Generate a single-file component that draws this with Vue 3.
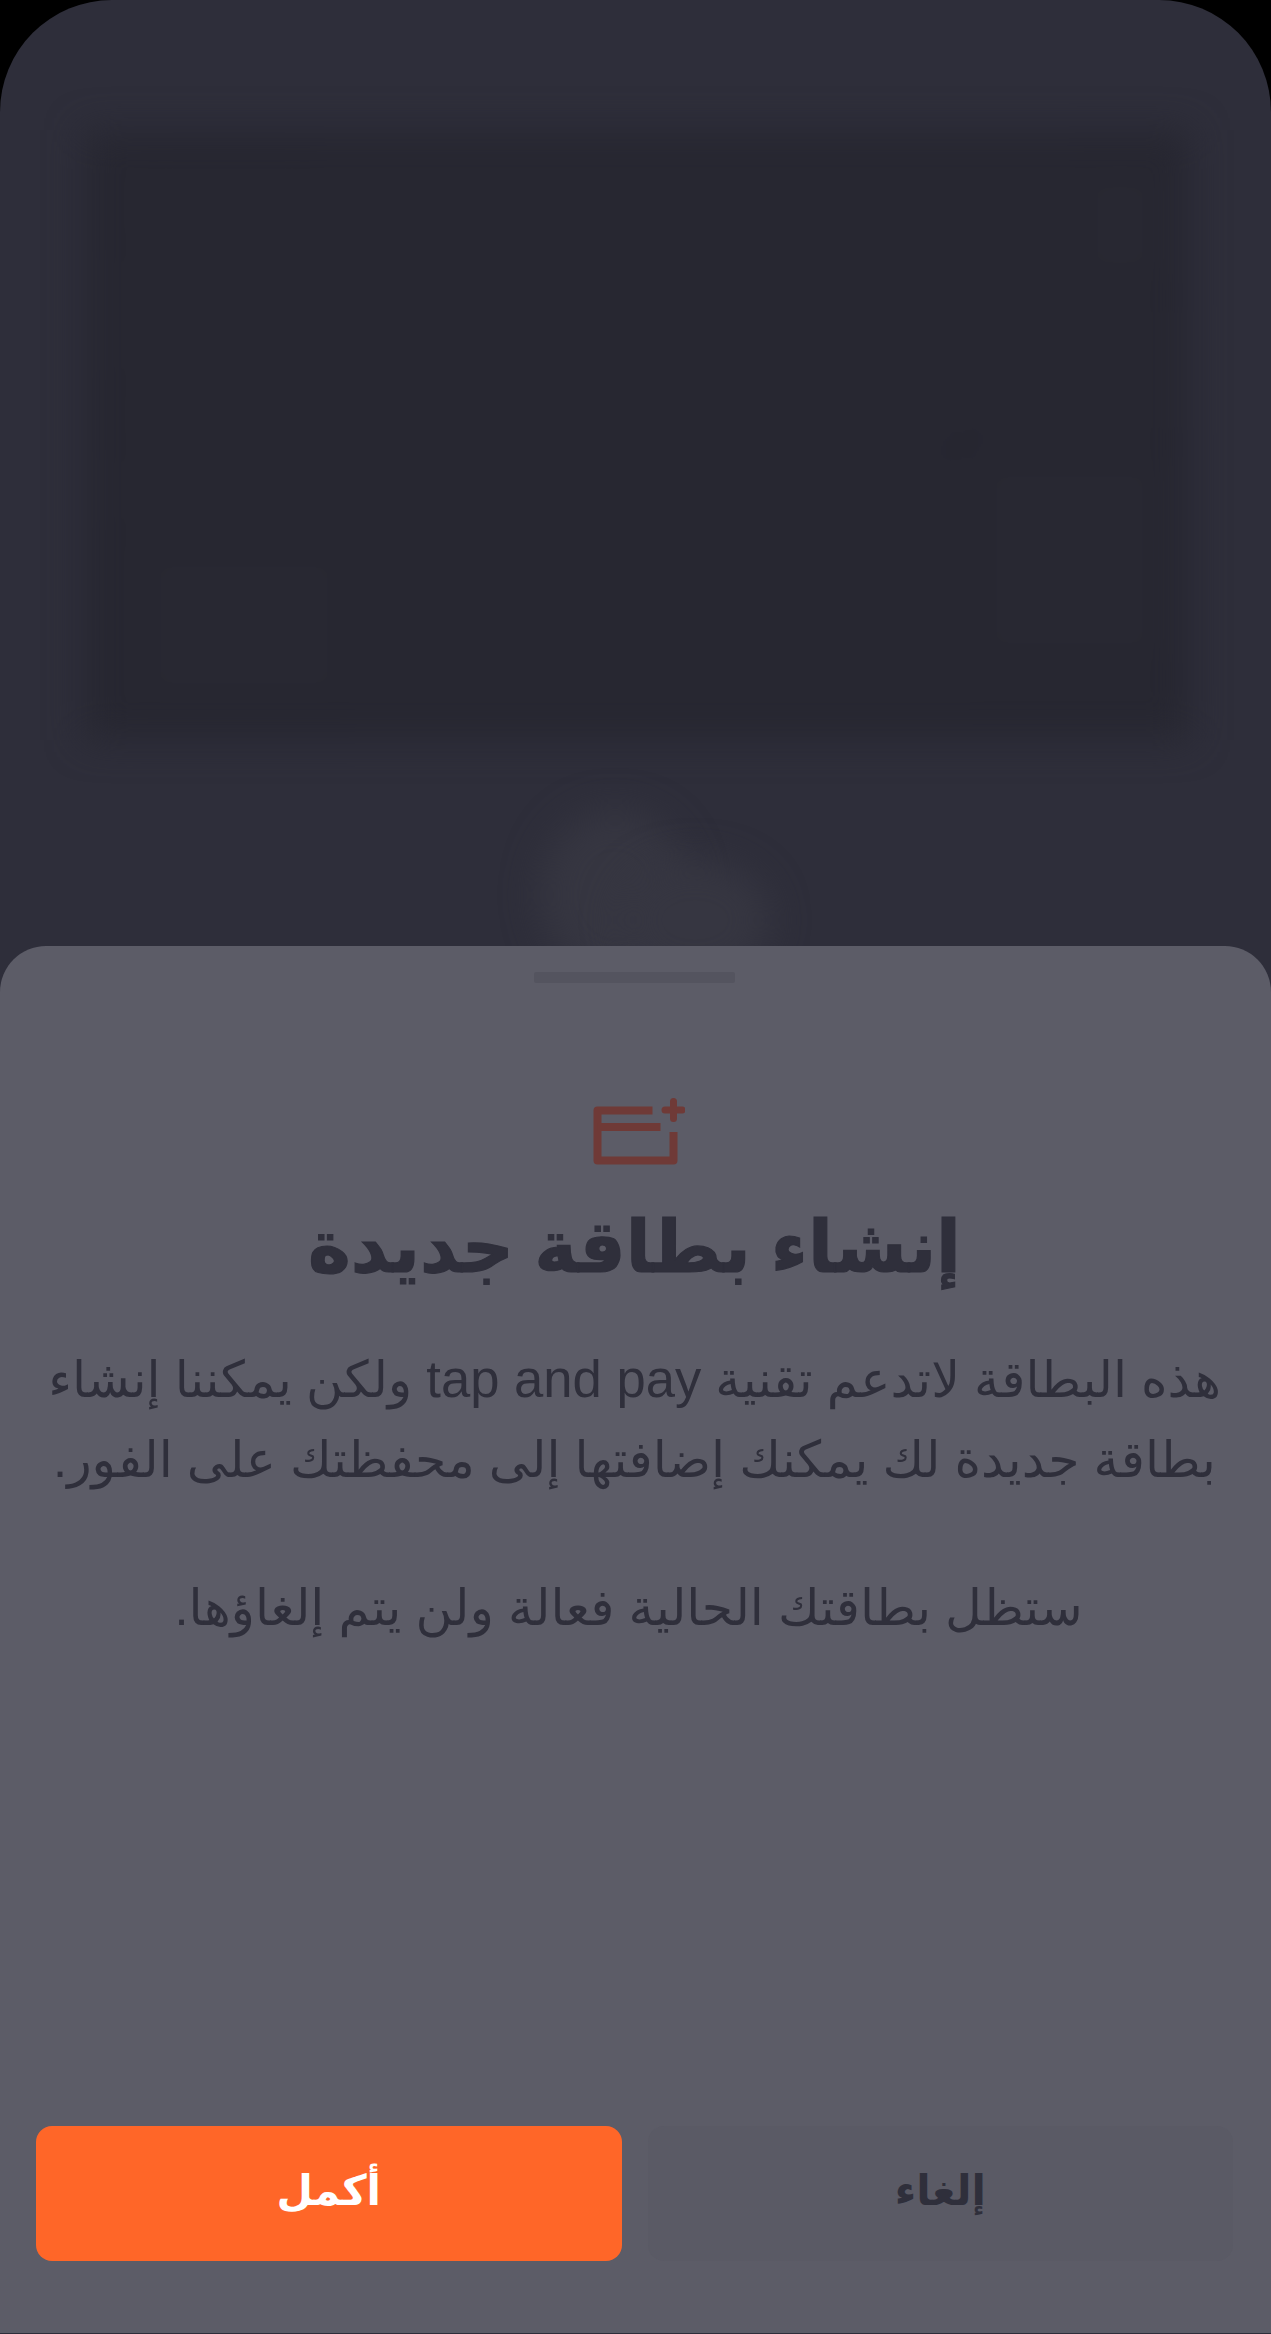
<template>
  <div class="screen" dir="rtl">
    <div class="backdrop">
      <div class="blur-card">
        <span class="smear smear-a"></span>
        <span class="smear smear-b"></span>
        <span class="smear smear-c"></span>
        <span class="smear smear-d"></span>
        <span class="smear smear-e"></span>
      </div>
      <div class="glow"></div>
      <div class="glow glow-side"></div>
    </div>

    <section class="sheet">
      <div class="handle"></div>

      <svg class="icon" width="100" height="68" viewBox="0 0 100 68" fill="none">
        <path d="M67.5 13.5H12.5V63.5H88.5V35" stroke="#6f3a37" stroke-width="8" stroke-linejoin="round" />
        <path d="M12.5 30H75.5" stroke="#6f3a37" stroke-width="8" />
        <path d="M88.5 4.5V21.5M80 13H97" stroke="#6f3a37" stroke-width="7" stroke-linecap="round" />
      </svg>

      <h1 class="title">إنشاء بطاقة جديدة</h1>

      <p class="body">هذه البطاقة لاتدعم تقنية <span class="latin">tap and pay</span> ولكن يمكننا إنشاء بطاقة جديدة لك يمكنك إضافتها إلى محفظتك على الفور.</p>
      <p class="body second">ستظل بطاقتك الحالية فعالة ولن يتم إلغاؤها.</p>

      <div class="actions">
        <button class="btn cancel">إلغاء</button>
        <button class="btn confirm">أكمل</button>
      </div>
    </section>
  </div>
</template>

<script setup>
</script>

<style>
html, body {
  margin: 0;
  background: #000;
}
</style>

<style scoped>
.screen {
  position: relative;
  width: 1271px;
  height: 2334px;
  background: #000;
  overflow: hidden;
  display: flex;
  flex-direction: column;
  justify-content: flex-end;
  font-family: "Liberation Sans", "DejaVu Sans", sans-serif;
}
.backdrop {
  position: absolute;
  inset: 0;
  background: #2e2e3a;
  border-radius: 112px 112px 0 0;
  overflow: hidden;
}
.blur-card {
  position: absolute;
  left: 84px;
  top: 130px;
  width: 1106px;
  height: 610px;
  background: #272731;
  filter: blur(18px);
}
.smear {
  position: absolute;
  background: #282832;
  filter: blur(14px);
}
.smear-a { left: 60px; top: 50px; width: 170px; height: 50px; }
.smear-b { right: 30px; top: 40px; width: 80px; height: 110px; }
.smear-c { left: 60px; top: 270px; width: 800px; height: 30px; }
.smear-d { left: 60px; top: 420px; width: 200px; height: 150px; }
.smear-e { right: 30px; top: 330px; width: 180px; height: 200px; }
.glow {
  position: absolute;
  left: 540px;
  top: 810px;
  width: 150px;
  height: 170px;
  border-radius: 50%;
  background: #363641;
  filter: blur(18px);
}
.glow-side {
  left: 620px;
  top: 860px;
  width: 150px;
  height: 120px;
}
.sheet {
  position: relative;
  height: 1387px;
  margin-bottom: 1px;
  background: #5c5c67;
  border-radius: 46px 46px 0 0;
  box-sizing: border-box;
  padding: 26px 38px 72px 36px;
  display: flex;
  flex-direction: column;
  align-items: center;
}
.handle {
  width: 201px;
  height: 11px;
  background: #54545f;
  border-radius: 2px;
}
.icon {
  display: block;
  margin-top: 114px;
}
.title {
  margin: 27px 0 0;
  color: #2f2f3b;
  font-size: 72.5px;
  line-height: 110px;
  font-weight: 700;
  text-align: center;
  -webkit-text-stroke: 1.2px #2f2f3b;
}
.body {
  margin: 37px 0 0;
  color: #2f2f3b;
  font-size: 50.6px;
  line-height: 80px;
  text-align: center;
}
.latin {
  font-size: 52.6px;
}
.second {
  margin-top: 68px;
  margin-right: 12px;
}
.actions {
  margin-top: auto;
  align-self: stretch;
  display: flex;
  gap: 26px;
}
.btn {
  flex: 1;
  height: 135px;
  border: 0;
  border-radius: 16px;
  padding: 0 0 6px;
  font-family: inherit;
  font-size: 42px;
  font-weight: 700;
}
.cancel {
  background: #5a5a65;
  color: #2f2f3b;
}
.confirm {
  background: #ff6628;
  color: #fff;
}
</style>
